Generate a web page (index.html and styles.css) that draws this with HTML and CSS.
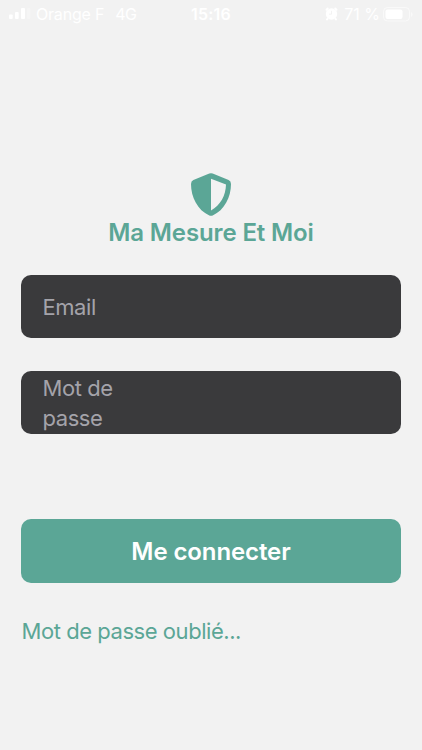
FILE: index.html
```html
<!DOCTYPE html>
<html lang="fr">
<head>
<meta charset="utf-8">
<title>Ma Mesure Et Moi</title>
<link rel="stylesheet" href="styles.css">
</head>
<body>
<header class="status">
  <div class="status-left">
    <svg class="signal" width="22" height="12" viewBox="0 0 22 12" fill="#fff"><rect x="0" y="6.5" width="3.7" height="4.5" rx="1"/><rect x="6" y="4" width="3.7" height="7" rx="1"/><rect x="12" y="0" width="4" height="11" rx="1"/><rect x="18" y="0" width="3.5" height="11" rx="1" opacity=".25"/></svg>
    <span class="carrier">Orange F</span>
    <span class="network">4G</span>
  </div>
  <span class="clock">15:16</span>
  <div class="status-right">
    <svg class="alarm" width="13" height="14" viewBox="0 0 13 14"><circle cx="6.5" cy="7" r="5.7" fill="#fff"/><path d="M1.5 2.7 2.7 1.5M10.3 1.5l1.2 1.2M2.5 11.8l-.5.7M10.5 11.8l.5.7" stroke="#fff" stroke-width="2" stroke-linecap="round"/><path d="M6.5 3.8V7.2H4" fill="none" stroke="#f2f2f2" stroke-width=".9"/></svg>
    <span class="percent">71 %</span>
    <svg class="battery" width="30" height="15" viewBox="0 0 30 15"><rect x=".5" y=".5" width="26" height="13.5" rx="4" fill="none" stroke="#fff" opacity=".55"/><rect x="2.5" y="2.5" width="17" height="9.5" rx="2" fill="#fff"/><path d="M28 5v5q1.6-.7 1.6-2.5T28 5" fill="#fff" opacity=".55"/></svg>
  </div>
</header>
<main class="login">
  <svg class="shield" width="40" height="43" viewBox="0 0 40 43"><path fill="#5ba696" fill-rule="evenodd" d="M18.3.6Q20-.3 21.7.6L37.6 7Q40 8 40 11C40 24 33.5 37.2 21.7 42.4Q20 43 18.3 42.4C6.5 37.2 0 24 0 11Q0 8 2.4 7ZM20 5.7V37.4C29.5 32.5 34.7 22.5 35 11.6Z"/></svg>
  <h1 class="title">Ma Mesure Et Moi</h1>
  <div class="field email"><span class="label">Email</span></div>
  <div class="field password"><span class="label">Mot de passe</span></div>
  <button class="submit" type="button">Me connecter</button>
  <a class="forgot">Mot de passe oublié...</a>
</main>
</body>
</html>
```
FILE: styles.css
```css
* {
  box-sizing: border-box;
}

body {
  margin: 0;
  height: 750px;
  overflow: hidden;
  background: #f2f2f2;
  font-family: Inter, "Liberation Sans", sans-serif;
}

.status {
  display: grid;
  grid-template-columns: 1fr auto 1fr;
  align-items: center;
  height: 28px;
  padding: 0 9px;
  color: #fff;
  font-size: 16px;
  line-height: 28px;
}

.status-left,
.status-right {
  display: flex;
  align-items: center;
}

.status-right {
  justify-content: flex-end;
}

.carrier {
  margin-left: 5px;
  letter-spacing: -0.2px;
}

.network {
  margin-left: 11px;
  letter-spacing: -0.4px;
}

.clock {
  font-weight: 600;
  letter-spacing: 0.2px;
}

.percent {
  margin: 0 3px 0 6px;
}

.login {
  display: flex;
  flex-direction: column;
  padding: 145px 21px 0;
}

.shield {
  align-self: center;
}

.title {
  margin: 1px 0 27px;
  color: #5ba696;
  font-size: 24px;
  font-weight: 600;
  line-height: 31px;
  letter-spacing: -0.12px;
  text-align: center;
  white-space: nowrap;
}

.field {
  display: flex;
  align-items: center;
  height: 63px;
  padding: 0 21.5px;
  border-radius: 10px;
  background: #3a3a3c;
  color: #a4a3aa;
  font-size: 22px;
  line-height: 30px;
  letter-spacing: -0.45px;
}

.password {
  margin-top: 33px;
}

.label {
  width: 90px;
}

.submit {
  height: 64px;
  margin-top: 85px;
  padding: 1px 0 0;
  border: 0;
  border-radius: 10px;
  background: #5ba696;
  color: #fff;
  font: 600 24px/30px Inter, "Liberation Sans", sans-serif;
  letter-spacing: -0.1px;
}

.forgot {
  align-self: flex-start;
  margin: 33px 0 0 0.5px;
  color: #5ba696;
  font-size: 22px;
  line-height: 30px;
  letter-spacing: -0.45px;
  white-space: nowrap;
}
```
